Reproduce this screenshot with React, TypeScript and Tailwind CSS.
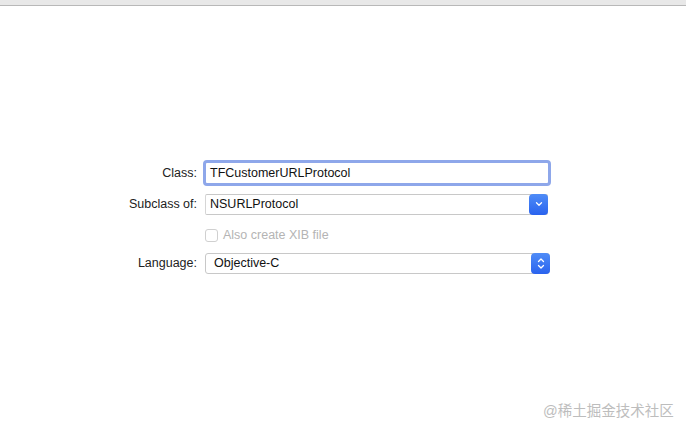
import React from "react";

const font = { fontFamily: '"Liberation Sans", Arial, sans-serif' };

function Chevron() {
  return (
    <svg width="8" height="6" viewBox="0 0 8 6">
      <path d="M1.5 1.8 L4 4.2 L6.5 1.8" fill="none" stroke="white" strokeWidth="1.3" strokeLinecap="round" strokeLinejoin="round" />
    </svg>
  );
}

function UpDown() {
  return (
    <svg width="8" height="13" viewBox="0 0 8 13">
      <path d="M1.5 4.5 L4 2 L6.5 4.5" fill="none" stroke="white" strokeWidth="1.3" strokeLinecap="round" strokeLinejoin="round" />
      <path d="M1.5 8.5 L4 11 L6.5 8.5" fill="none" stroke="white" strokeWidth="1.3" strokeLinecap="round" strokeLinejoin="round" />
    </svg>
  );
}

export default function App() {
  return (
    <div className="w-[686px] h-[434px] bg-white relative overflow-hidden text-[#222]" style={font}>
      <div className="h-[6px] bg-[#e8e8e8] border-b border-[#b8b8b8]" />
      <div className="flex flex-col pt-[154px] pl-[110px] text-[12.5px]">
        <div className="flex items-center h-[26px]">
          <div className="w-[93px] text-right pr-[6px] whitespace-nowrap">Class:</div>
          <div className="w-[348px] h-[26px] rounded-[4px] border-[3px] border-[#8ea7ea] flex items-center bg-white">
            <div className="pl-[4px] text-[#111]">TFCustomerURLProtocol</div>
          </div>
        </div>
        <div className="flex items-center h-[22px] mt-[7px]">
          <div className="w-[93px] text-right pr-[6px] whitespace-nowrap">Subclass of:</div>
          <div className="ml-[2px] w-[343px] h-[21px] border border-[#c8c8c8] border-l-[#d6d6d6] flex items-center justify-between bg-white rounded-[2px]">
            <div className="pl-[4px] text-[#111]">NSURLProtocol</div>
            <div className="w-[19px] h-[21px] -mr-px rounded-[4px] bg-gradient-to-b from-[#4f8cf7] to-[#2a62ee] flex items-center justify-center">
              <Chevron />
            </div>
          </div>
        </div>
        <div className="flex items-center h-[16px] mt-[12px] pl-[95px]">
          <div className="w-[13px] h-[13px] rounded-[3px] border border-[#d0d0d0] bg-white" />
          <div className="ml-[5px] text-[#b4b4b4] whitespace-nowrap">Also create XIB file</div>
        </div>
        <div className="flex items-center h-[22px] mt-[9px]">
          <div className="w-[93px] text-right pr-[6px] whitespace-nowrap">Language:</div>
          <div className="ml-[2px] w-[345px] h-[21px] border border-[#c8c8c8] flex items-center justify-between bg-white rounded-[3px]">
            <div className="pl-[8px] text-[#111]">Objective-C</div>
            <div className="w-[19px] h-[21px] -mr-px rounded-[4px] bg-gradient-to-b from-[#4f8cf7] to-[#2a62ee] flex items-center justify-center">
              <UpDown />
            </div>
          </div>
        </div>
      </div>
      <div
        className="absolute left-[543px] top-[401px] text-[14.5px] text-[#bdbdbd] whitespace-nowrap"
        style={{ fontFamily: '"Liberation Sans", "Noto Sans CJK SC", sans-serif' }}
      >
        @稀土掘金技术社区
      </div>
    </div>
  );
}
